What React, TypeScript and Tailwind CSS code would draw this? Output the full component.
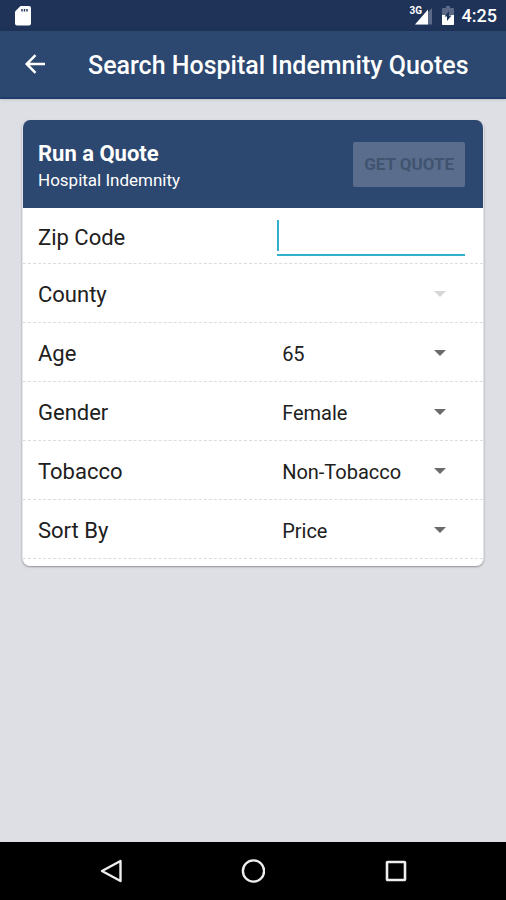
import { useState } from 'react';

interface SelectRowProps {
  id: string;
  label: string;
  options: string[];
  disabled?: boolean;
}

function SelectRow({ id, label, options, disabled = false }: SelectRowProps) {
  const [value, setValue] = useState(options[0] ?? '');

  return (
    <div className="flex h-[59px] items-center border-b border-dashed border-[#dcdcdc] pl-[15px] pr-[18px] pt-1">
      <label htmlFor={id} className="flex-1 text-[22px] leading-7">
        {label}
      </label>
      <div className="relative w-[44%]">
        <select
          id={id}
          value={value}
          disabled={disabled}
          onChange={(e) => setValue(e.target.value)}
          className="h-10 w-full appearance-none bg-transparent pl-[5px] pr-12 text-xl text-[#202020] outline-none"
        >
          {options.map((option) => (
            <option key={option} value={option}>
              {option}
            </option>
          ))}
        </select>
        <svg
          viewBox="0 0 12 6"
          className={`pointer-events-none absolute right-[19px] top-4 h-[6px] w-3 ${disabled ? 'text-[#d6d6d6]' : 'text-[#6b6b6b]'}`}
          aria-hidden="true"
        >
          <path d="M0 0h12L6 6z" fill="currentColor" />
        </svg>
      </div>
    </div>
  );
}

function StatusBar() {
  return (
    <div className="flex h-[31px] items-center justify-between bg-[#1f3258] pl-[14px] pr-[9px] text-white">
      {/* SD card */}
      <svg viewBox="0 0 18 20" className="h-5 w-[18px]" aria-hidden="true">
        <path d="M6.500 0H15a2 2 0 0 1 2 2v15.500a2 2 0 0 1-2 2H3a2 2 0 0 1-2-2V5.500z" fill="#fff" />
        <path d="M8 3v2.500M10.500 3v2.500M13 3v2.500" stroke="#1f3258" strokeWidth="1.400" />
      </svg>
      <div className="flex items-center">
        <div className="relative h-5 w-[23px]">
          <svg viewBox="0 0 23 20" className="h-5 w-[23px]" aria-hidden="true">
            <path d="M22 2v16.500H5z" fill="#5b6986" />
            <path d="M18 3.500v15H5z" fill="#fff" />
          </svg>
          <span className="absolute left-0 top-0 text-[10px] font-bold leading-[10px]">3G</span>
        </div>
        {/* Battery, charging */}
        <svg viewBox="0 0 12 19" className="ml-[9px] h-[19px] w-3" aria-hidden="true">
          <path d="M4 0h4v2h3.200q.8 0 .8.800V10H0V2.800Q0 2 .8 2H4z" fill="#5b6986" />
          <path d="M0 9h12v9.200q0 .8-.8.800H.8q-.8 0-.8-.800z" fill="#fff" />
          <path d="M7 5v4.500h2.500L5 15v-4.500H2.500z" fill="#1f3258" />
        </svg>
        <span className="ml-2 text-lg font-medium leading-5">4:25</span>
      </div>
    </div>
  );
}

function NavigationBar() {
  return (
    <nav className="grid h-[58px] grid-cols-3 items-center justify-items-center bg-black px-10 text-[#eeeeee]">
      <button type="button" aria-label="Back">
        <svg viewBox="0 0 24 24" className="h-6 w-6" fill="none" stroke="currentColor" strokeWidth="2.400">
          <path d="M21.500 2v20L3 12z" strokeLinejoin="round" />
        </svg>
      </button>
      <button type="button" aria-label="Home">
        <svg viewBox="0 0 24 24" className="h-6 w-6" fill="none" stroke="currentColor" strokeWidth="2.400">
          <circle cx="12.500" cy="12" r="10.600" />
        </svg>
      </button>
      <button type="button" aria-label="Recent apps">
        <svg viewBox="0 0 24 24" className="h-6 w-6" fill="none" stroke="currentColor" strokeWidth="2.600">
          <rect x="4" y="3" width="18" height="18" rx="0.500" />
        </svg>
      </button>
    </nav>
  );
}

export default function App() {
  const [zip, setZip] = useState('');

  return (
    <div className="flex min-h-screen flex-col bg-[#dddfe4] font-[Roboto,sans-serif] text-[#202020]">
      <StatusBar />

      <header className="z-10 flex h-[68px] items-center border-b-2 border-[#1f3e6d] bg-[#2c4770] pl-6 text-white shadow-sm">
        <button type="button" aria-label="Go back">
          <svg viewBox="0 0 22 20" className="h-5 w-[22px]" fill="none" stroke="currentColor" strokeWidth="2.500">
            <path d="M21 10H3M11.500 1.200L2.700 10l8.800 8.800" />
          </svg>
        </button>
        <h1 className="ml-[42px] whitespace-nowrap pt-1 text-[25px] font-medium leading-8">Search Hospital Indemnity Quotes</h1>
      </header>

      <main className="flex-1 px-[22px] pt-[21px]">
        <form
          className="overflow-hidden rounded-lg border-x border-[#e3e4e8] bg-white pb-[7px] shadow-[0_1px_2px_rgba(0,0,0,0.35)]"
          onSubmit={(e) => e.preventDefault()}
        >
          <div className="flex h-[88px] items-center justify-between bg-[#2c4770] pl-[15px] pr-[18px] text-white">
            <div className="pt-1">
              <h2 className="text-[22px] font-bold leading-7">Run a Quote</h2>
              <p className="text-[17px] leading-6">Hospital Indemnity</p>
            </div>
            <button
              type="submit"
              disabled={!zip}
              className="h-[45px] rounded-xs bg-[#5a6d8d] px-[11px] pt-[2px] text-[17px] font-bold text-[#40536f]"
            >
              GET QUOTE
            </button>
          </div>

          {/* Zip code */}
          <div className="flex h-14 items-center border-b border-dashed border-[#dcdcdc] pl-[15px] pr-[18px] pt-1">
            <label htmlFor="zip" className="flex-1 text-[22px] leading-7">
              Zip Code
            </label>
            <div className="relative w-[44%]">
              <input
                id="zip"
                type="text"
                inputMode="numeric"
                value={zip}
                onChange={(e) => setZip(e.target.value)}
                className={`h-9 w-full border-b-2 border-[#33b0cc] pl-[5px] text-xl outline-none ${zip ? 'caret-[#33b0cc]' : 'caret-transparent'}`}
              />
              {!zip && <span className="pointer-events-none absolute left-0 top-0 h-[31px] w-[2px] bg-[#33b0cc]" />}
            </div>
          </div>

          <SelectRow id="county" label="County" options={[]} disabled />
          <SelectRow id="age" label="Age" options={['65', '66', '67', '68', '69', '70']} />
          <SelectRow id="gender" label="Gender" options={['Female', 'Male']} />
          <SelectRow id="tobacco" label="Tobacco" options={['Non-Tobacco', 'Tobacco']} />
          <SelectRow id="sort" label="Sort By" options={['Price', 'Company']} />
        </form>
      </main>

      <NavigationBar />
    </div>
  );
}
